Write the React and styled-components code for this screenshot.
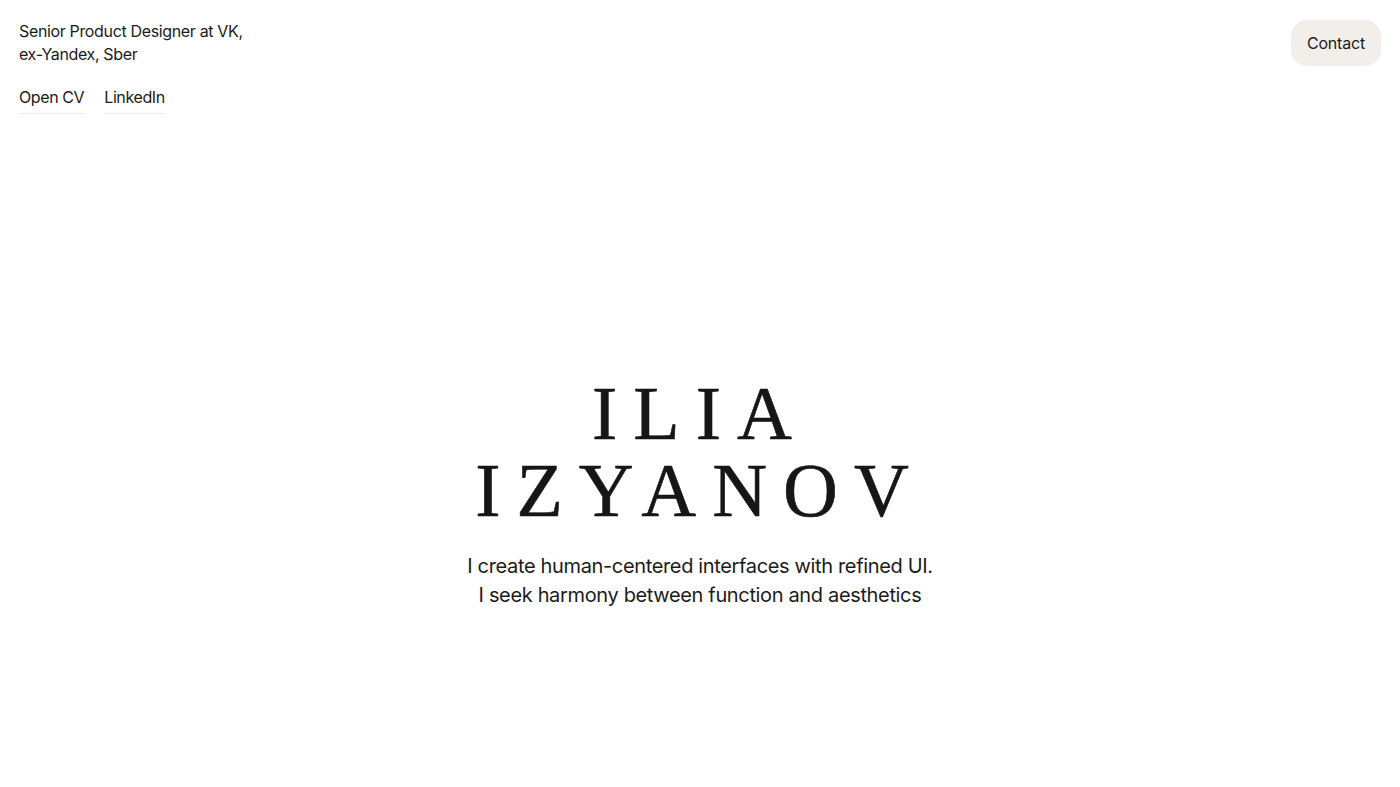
import styled, { createGlobalStyle } from "styled-components";

const GlobalStyle = createGlobalStyle`
  * { box-sizing: border-box; }
  body {
    margin: 0;
    background: #fff;
    color: #1b1b1b;
    font-family: Inter, "Noto Sans", sans-serif;
  }
`;

const Page = styled.div`
  min-height: 100vh;
  display: flex;
  flex-direction: column;
`;

const Header = styled.header`
  display: flex;
  justify-content: space-between;
  align-items: flex-start;
  padding: 20px 19px 0;
`;

const Intro = styled.div`
  display: flex;
  flex-direction: column;
  gap: 20px;
`;

const Role = styled.p`
  margin: 0;
  font-size: 16px;
  line-height: 23px;
  letter-spacing: -0.35px;
`;

const Links = styled.nav`
  display: flex;
  gap: 20px;
`;

const LinkItem = styled.a`
  font-size: 16px;
  line-height: 23px;
  letter-spacing: -0.4px;
  color: inherit;
  text-decoration: none;
  padding-bottom: 4px;
  border-bottom: 1px solid #ece8e4;
`;

const ContactButton = styled.button`
  border: none;
  background: #f2efeb;
  color: #1b1b1b;
  font-family: inherit;
  font-size: 16px;
  letter-spacing: -0.2px;
  height: 46px;
  padding: 0 16px;
  border-radius: 16px;
  cursor: pointer;
`;

const Hero = styled.main`
  display: flex;
  flex-direction: column;
  align-items: center;
  padding-top: 261px;
`;

const Name = styled.h1`
  margin: 0;
  font-family: "Liberation Serif", "Times New Roman", serif;
  font-weight: 400;
  font-size: 76px;
  line-height: 77px;
  letter-spacing: 16px;
  text-align: center;
  color: #161616;
  -webkit-text-stroke: 0.6px #161616;
`;

const Tagline = styled.p`
  margin: 23px 0 0;
  font-size: 20px;
  line-height: 29px;
  letter-spacing: -0.35px;
  text-align: center;
`;

export default function App() {
  return (
    <Page>
      <GlobalStyle />
      <Header>
        <Intro>
          <Role>
            Senior Product Designer at VK,
            <br />
            ex-Yandex, Sber
          </Role>
          <Links>
            <LinkItem href="#">Open CV</LinkItem>
            <LinkItem href="#">LinkedIn</LinkItem>
          </Links>
        </Intro>
        <ContactButton>Contact</ContactButton>
      </Header>
      <Hero>
        <Name>
          ILIA
          <br />
          IZYANOV
        </Name>
        <Tagline>
          I create human-centered interfaces with refined UI.
          <br />
          I seek harmony between function and aesthetics
        </Tagline>
      </Hero>
    </Page>
  );
}
